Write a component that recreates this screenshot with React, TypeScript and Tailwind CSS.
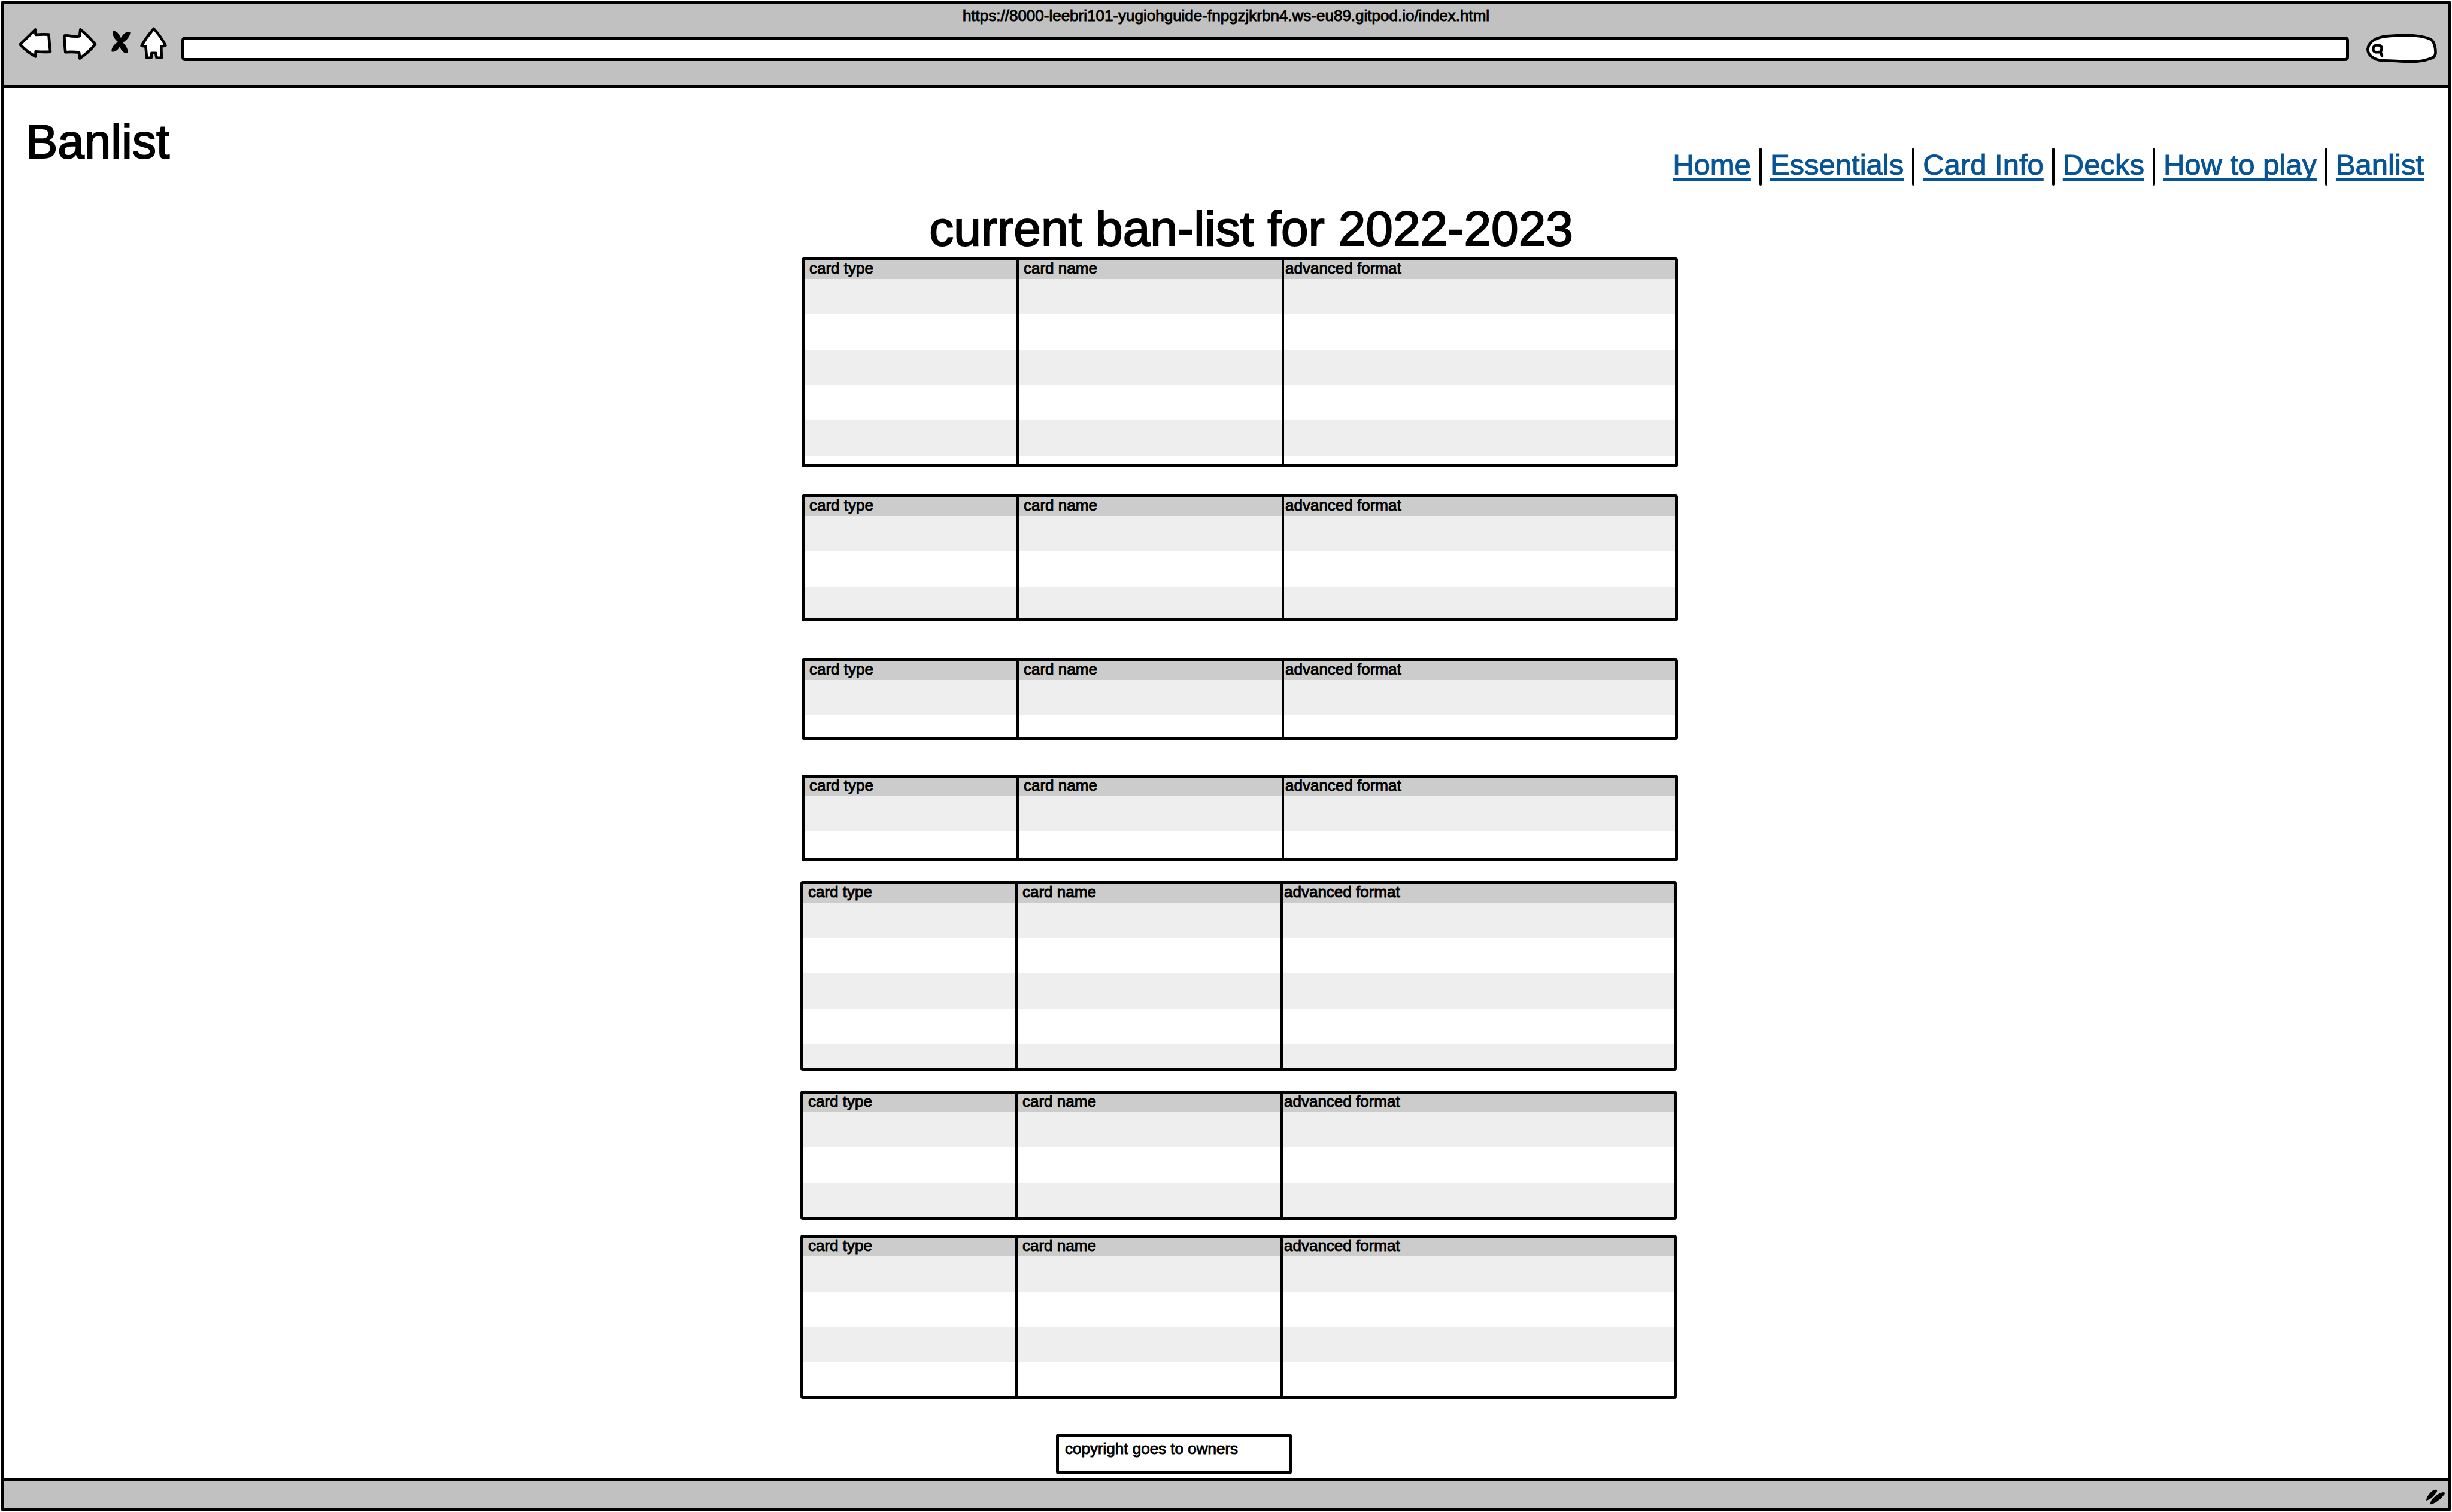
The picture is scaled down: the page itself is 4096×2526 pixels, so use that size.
import React from "react";

type CardTable = {
  id: string;
  rows: number;
  className: string;
};

const links = ["Home", "Essentials", "Card Info", "Decks", "How to play", "Banlist"];

const tables: CardTable[] = [
  { id: "list-1", rows: 6, className: "mt-2 h-[351px]" },
  { id: "list-2", rows: 3, className: "mt-[45px] h-[212px]" },
  { id: "list-3", rows: 2, className: "mt-[62px] h-[136px]" },
  { id: "list-4", rows: 2, className: "mt-[58px] h-[145px]" },
  { id: "list-5", rows: 5, className: "mt-[33px] mr-0.5 -ml-0.5 h-[317px]" },
  { id: "list-6", rows: 3, className: "mt-[33px] mr-0.5 -ml-0.5 h-[216px]" },
  { id: "list-7", rows: 4, className: "mt-[25px] mr-0.5 -ml-0.5 h-[274px]" },
];

const outline = {
  fill: "white",
  stroke: "black",
  strokeWidth: 14,
  strokeLinejoin: "round" as const,
  strokeLinecap: "round" as const,
};

function BrowserHeader() {
  return (
    <header className="border-b-[5px] border-black bg-[#c1c1c1] pt-1 pb-[22px]">
      <p className="text-center text-[26px] leading-8">
        https://8000-leebri101-yugiohguide-fnpgzjkrbn4.ws-eu89.gitpod.io/index.html
      </p>
      <div className="flex h-[78px] items-center pr-[18px] pl-[23px]">
        <button type="button" aria-label="Back" className="shrink-0">
          <svg className="h-[72px] w-[58px]" viewBox="90 137 176 218">
            <path
              {...outline}
              d="M101 226 L178 150 L180 176 Q212 173 246 175 Q249 218 254 263 Q216 265 180 262 L179 287 Q136 264 101 226 Z"
            />
          </svg>
        </button>
        <button type="button" aria-label="Forward" className="ml-[15px] shrink-0">
          <svg className="h-[72px] w-[60px]" viewBox="312 137 182 218">
            <path
              {...outline}
              d="M325 182 Q328 179 345 181 Q376 187 403 183 L407 150 Q446 180 482 225 Q446 269 404 296 L400 266 Q366 262 331 265 Q327 224 325 182 Z"
            />
          </svg>
        </button>
        <button type="button" aria-label="Stop" className="ml-[22px] shrink-0">
          <svg className="h-[72px] w-[34px]" viewBox="560 137 104 218">
            <path d="M570 157 C588 152 603 171 612 192 C624 170 642 155 660 162 C660 184 643 202 622 216 C637 230 648 246 648 269 C628 274 613 257 606 236 C597 253 584 264 565 263 C561 244 577 224 597 212 C579 199 568 178 570 157 Z" />
          </svg>
        </button>
        <button type="button" aria-label="Home" className="ml-[14px] shrink-0">
          <svg className="h-[72px] w-[47px]" viewBox="708 137 144 218">
            <path
              {...outline}
              d="M781 145 Q818 184 841 231 L819 237 L821 294 L796 294 Q792 282 792 270 L770 270 Q771 284 768 294 L745 294 L740 236 L719 232 Q744 186 781 145 Z"
            />
          </svg>
        </button>
        <input
          type="text"
          aria-label="Address"
          className="ml-[23px] h-[41px] min-w-0 flex-1 rounded-[6px] border-[5px] border-black bg-white px-2 text-[26px] outline-none"
        />
        <div className="relative ml-[29px] h-[50px] w-[118px] shrink-0">
          <svg className="absolute inset-0 h-full w-full" viewBox="465 170 358 151">
            <path
              {...outline}
              d="M545 307 C505 303 473 283 472 250 C476 205 525 187 570 183 C640 176 735 174 790 198 C810 211 817 245 815 272 C812 290 800 294 785 298 C755 309 720 313 683 312 C635 312 590 306 545 307 Z"
            />
            <path {...outline} d="M536 263 C548 249 546 229 520 228 C496 228 493 262 511 264 C520 265 528 265 536 263 L544 282" />
          </svg>
          <input
            type="search"
            aria-label="Search"
            className="relative ml-8 h-full w-20 bg-transparent text-[26px] outline-none"
          />
        </div>
      </div>
    </header>
  );
}

function SiteNav() {
  return (
    <nav className="mt-[50px] flex items-start text-[49px] leading-[56px]">
      {links.map((link, index) => (
        <React.Fragment key={link}>
          {index > 0 && <span className="mx-[14px] h-[63px] w-1 rounded-full bg-black" />}
          <a
            href="#"
            className="text-[#065395] underline decoration-4 underline-offset-[6px] [text-decoration-skip-ink:none]"
          >
            {link}
          </a>
        </React.Fragment>
      ))}
    </nav>
  );
}

function BanTable({ rows, className }: { rows: number; className: string }) {
  return (
    <div className={`overflow-hidden rounded-[4px] border-[5px] border-black ${className}`}>
      <table className="w-full table-fixed border-separate border-spacing-0 text-left text-[26px] leading-[26px]">
        <colgroup>
          <col className="w-[358px]" />
          <col className="w-[443px]" />
          <col />
        </colgroup>
        <thead className="bg-[#cccccc]">
          <tr className="h-[31px]">
            <th scope="col" className="border-r-4 border-black p-0 pl-2 align-top font-normal">
              card type
            </th>
            <th scope="col" className="border-r-4 border-black p-0 pl-2 align-top font-normal">
              card name
            </th>
            <th scope="col" className="p-0 pl-0.5 align-top font-normal">
              advanced format
            </th>
          </tr>
        </thead>
        <tbody>
          {Array.from({ length: rows }, (_, row) => (
            <tr key={row} className="h-[59px] odd:bg-[#eeeeee] even:bg-white">
              <td className="border-r-4 border-black p-0" />
              <td className="border-r-4 border-black p-0" />
              <td className="p-0" />
            </tr>
          ))}
        </tbody>
      </table>
    </div>
  );
}

export default function App() {
  return (
    <div className="flex min-h-screen flex-col bg-white px-0.5 py-px font-['Liberation_Sans',Arial,sans-serif] text-black [-webkit-text-stroke:1px]">
      <div className="flex flex-1 flex-col rounded-[3px] border-[5px] border-black">
        <BrowserHeader />
        <main className="flex-1 pt-[50px]">
          <div className="flex items-start justify-between pr-10 pl-9">
            <h1 className="text-[80px] leading-[80px] [-webkit-text-stroke:2px]">Banlist</h1>
            <SiteNav />
          </div>
          <div className="pl-[46px]">
            <div className="mx-auto w-full max-w-[1464px]">
              <h2 className="mt-8 pl-[38px] text-center text-[82px] leading-[80px] [-webkit-text-stroke:2px]">
                current ban-list for 2022-2023
              </h2>
              {tables.map((table) => (
                <BanTable key={table.id} rows={table.rows} className={table.className} />
              ))}
              <footer className="mt-[58px] mb-1 ml-[425px] h-[68px] w-[394px] rounded-[4px] border-[5px] border-black pt-1 pl-2.5 text-[26px] leading-8">
                copyright goes to owners
              </footer>
            </div>
          </div>
        </main>
        <div className="flex h-[51px] items-center justify-end border-t-[5px] border-black bg-[#c1c1c1] pt-2 pr-[3px]">
          <svg className="h-7 w-[35px]" viewBox="465 230 105 85" aria-hidden="true">
            <path d="M471 291 C468 273 500 234 519 235 C528 236 526 243 522 250 C509 269 489 286 471 291 Z" />
            <path d="M492 310 C485 290 530 251 556 248 C565 248 566 253 563 258 C545 283 516 306 492 310 Z" />
          </svg>
        </div>
      </div>
    </div>
  );
}
